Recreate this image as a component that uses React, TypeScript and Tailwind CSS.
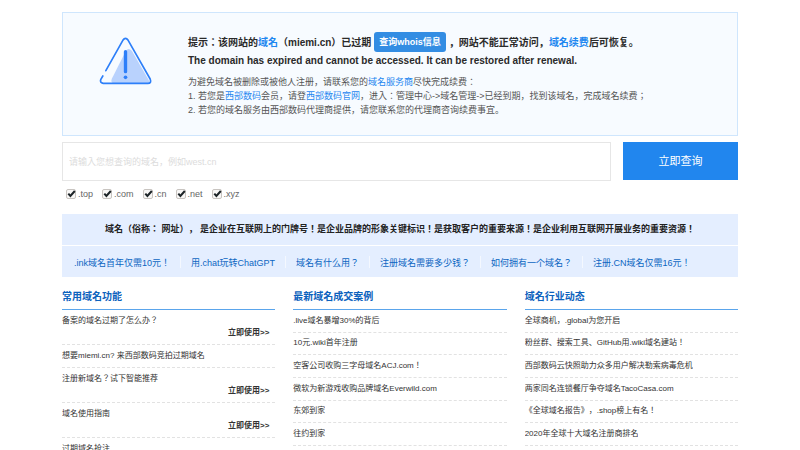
const suffixes = ['.top', '.com', '.cn', '.net', '.xyz']

const quickLinks = [
  '.ink域名首年仅需10元！',
  '用.chat玩转ChatGPT',
  '域名有什么用？',
  '注册域名需要多少钱？',
  '如何拥有一个域名？',
  '注册.CN域名仅需16元！',
]

const features = [
  { title: '备案的域名过期了怎么办？', action: true },
  { title: '想要miemi.cn? 来西部数码竞拍过期域名', action: false },
  { title: '注册新域名？试下智能推荐', action: true },
  { title: '域名使用指南', action: true },
  { title: '过期域名抢注', action: true },
]

const cases = [
  '.live域名暴增30%的背后',
  '10元.wiki首年注册',
  '空客公司收购三字母域名ACJ.com！',
  '微软为新游戏收购品牌域名Everwild.com',
  '东郊到家',
  '往约到家',
]

const news = [
  '全球商机，.global为您开启',
  '粉丝群、搜索工具、GitHub用.wiki域名建站！',
  '西部数码云快照助力众多用户解决勒索病毒危机',
  '两家同名连锁餐厅争夺域名TacoCasa.com',
  '《全球域名报告》，.shop榜上有名！',
  '2020年全球十大域名注册商排名',
]

function WarningIcon() {
  return (
    <svg className="h-12 w-[53px] shrink-0" viewBox="131 92 158 144" fill="none" aria-hidden="true">
      <path d="M211 134 Q218 122 229 133 L280 222 Q284 231 274 231 L176 231 Q164 229 169 217 Z" fill="#b9d2fd" />
      <path
        d="M151 193 L202 102 Q210 90 218 102 L284 218 Q289 231 277 231 L143 231 Q132 229 136 219 L142 209"
        stroke="#2d7ff9"
        strokeWidth="5"
        strokeLinecap="round"
        strokeLinejoin="round"
      />
      <path d="M210 136 V196" stroke="#2d7ff9" strokeWidth="10" strokeLinecap="round" />
      <circle cx="210" cy="213" r="5.5" fill="#2d7ff9" />
    </svg>
  )
}

function Notice() {
  return (
    <section className="flex items-start border border-[#cfe6fd] bg-[#f7fbff] pt-[18px] pr-4 pb-[18px] pl-9">
      <div className="mt-[6px] mr-9 shrink-0">
        <WarningIcon />
      </div>
      <div className="whitespace-nowrap">
        <h1 className="flex h-[22px] items-center text-[10px] font-bold text-[#2a2a2a]">
          <span>
            提示：该网站的<a href="#domain" className="text-[#1e87f0]">域名</a>（miemi.cn）已过期
          </span>
          <a href="#whois" className="mx-[3px] rounded-[3px] bg-[#338de3] px-[5px] py-[3px] text-[9px] leading-[14px] text-white">
            查询whois信息
          </a>
          <span>
            ，网站不能正常访问，<a href="#renew" className="text-[#1e87f0]">域名续费</a>后可恢复。
          </span>
        </h1>
        <p className="text-[10px] leading-4 font-bold text-[#2a2a2a]">
          The domain has expired and cannot be accessed. It can be restored after renewal.
        </p>
        <div className="mt-[6px] text-[9px] leading-[14px] text-[#555]">
          <p>
            为避免域名被删除或被他人注册，请联系您的<a href="#provider" className="text-[#1e87f0]">域名服务商</a>尽快完成续费：
          </p>
          <p>
            1. 若您是<a href="#west" className="text-[#1e87f0]">西部数码</a>会员，请登<a href="#site" className="text-[#1e87f0]">西部数码官网</a>，进入：管理中心-&gt;域名管理-&gt;已经到期，找到该域名，完成域名续费；
          </p>
          <p>2. 若您的域名服务由西部数码代理商提供，请您联系您的代理商咨询续费事宜。</p>
        </div>
      </div>
    </section>
  )
}

function SearchForm() {
  return (
    <form className="mt-[6px]" onSubmit={(e) => e.preventDefault()}>
      <div className="flex items-start gap-3">
        <input
          type="text"
          aria-label="域名"
          placeholder="请输入您想查询的域名，例如west.cn"
          className="h-[39px] min-w-0 flex-1 border border-[#e6e6e6] bg-white px-[6px] text-[9px] outline-none placeholder:text-[#dcdcdc]"
        />
        <button type="submit" className="h-[38px] w-[17%] bg-[#2186ee] text-[11px] text-white">
          立即查询
        </button>
      </div>
      <div className="mt-[6px] flex gap-[9px] pl-1">
        {suffixes.map((name) => (
          <label key={name} className="flex items-center gap-[2px] text-[9px] leading-[14px] text-[#666]">
            <span className="grid">
              <input
                type="checkbox"
                defaultChecked
                className="peer col-start-1 row-start-1 size-[10px] appearance-none rounded-[2px] border border-[#c8c4c0] bg-[#f8f7f6]"
              />
              <svg
                className="pointer-events-none invisible col-start-1 row-start-1 size-[10px] peer-checked:visible"
                viewBox="0 0 10 10"
                fill="none"
              >
                <path d="M2.3 4.6 L4.4 7 L8.8 2" stroke="#1c2427" strokeWidth="2" />
              </svg>
            </span>
            {name}
          </label>
        ))}
      </div>
    </form>
  )
}

function Banner() {
  return (
    <section className="mt-[13px] bg-[#e4eeff] whitespace-nowrap">
      <p className="border-b border-white text-center text-[9px] leading-[31px] font-bold text-[#222]">
        域名（俗称： 网址）， 是企业在互联网上的门牌号！是企业品牌的形象关键标识！是获取客户的重要来源！是企业利用互联网开展业务的重要资源！
      </p>
      <ul className="flex h-[31px] items-center divide-x divide-[#f4f8ff] pl-[2px]">
        {quickLinks.map((text) => (
          <li key={text} className="px-[10px] leading-[10px]">
            <a href="#article" className="text-[9px] text-[#0c66c2]">{text}</a>
          </li>
        ))}
      </ul>
    </section>
  )
}

function ColumnTitle({ children }: { children: string }) {
  return (
    <h2 className="border-b border-[#5aa5ec] pt-3 pb-1 text-[10px] leading-4 font-bold text-[#0c62bd]">{children}</h2>
  )
}

function ArticleList({ title, items }: { title: string; items: string[] }) {
  return (
    <section className="min-w-0">
      <ColumnTitle>{title}</ColumnTitle>
      <ul className="grid min-h-[136px] auto-rows-fr">
        {items.map((item) => (
          <li key={item} className="flex items-center border-b border-dashed border-[#e2e2e2]">
            <a href="#article" className="truncate text-[8px] leading-3 text-[#333]">{item}</a>
          </li>
        ))}
      </ul>
    </section>
  )
}

function FeatureList() {
  return (
    <section className="min-w-0">
      <ColumnTitle>常用域名功能</ColumnTitle>
      <ul>
        {features.map(({ title, action }) => (
          <li key={title} className="border-b border-dashed border-[#e2e2e2] py-[5px] text-[8px] leading-3 text-[#333]">
            <a href="#feature" className="block truncate">{title}</a>
            {action && (
              <a href="#use" className="block pr-[6px] text-right font-bold">
                立即使用&gt;&gt;
              </a>
            )}
          </li>
        ))}
      </ul>
    </section>
  )
}

export default function App() {
  return (
    <div className="h-screen overflow-hidden bg-white font-['Liberation_Sans','Noto_Sans_CJK_JP',sans-serif] [text-spacing-trim:space-all]">
      <main className="mx-auto w-[84.5%] pt-3">
        <Notice />
        <SearchForm />
        <Banner />
        <div className="grid grid-cols-3 gap-[18px]">
          <FeatureList />
          <ArticleList title="最新域名成交案例" items={cases} />
          <ArticleList title="域名行业动态" items={news} />
        </div>
      </main>
    </div>
  )
}
